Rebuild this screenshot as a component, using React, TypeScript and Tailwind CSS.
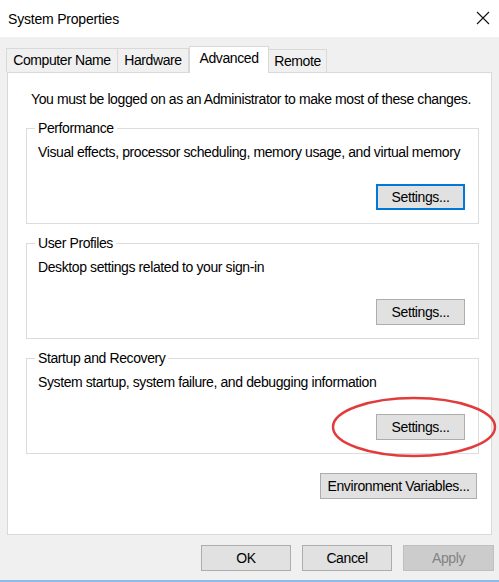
import React from "react";

function Btn({
  children,
  w,
  variant = "normal",
}: {
  children: React.ReactNode;
  w: string;
  variant?: "normal" | "focused" | "disabled";
}) {
  const base =
    "h-[26px] flex items-center justify-center text-[14px] tracking-[-0.4px] leading-none whitespace-nowrap";
  const v =
    variant === "focused"
      ? "bg-[#e1e1e1] border-2 border-[#0078d7] text-black"
      : variant === "disabled"
      ? "bg-[#cccccc] border border-[#bfbfbf] text-[#838383]"
      : "bg-[#e1e1e1] border border-[#adadad] text-black";
  return <div className={`${base} ${v} ${w}`}>{children}</div>;
}

function Group({
  title,
  desc,
  focused,
}: {
  title: string;
  desc: string;
  focused?: boolean;
}) {
  return (
    <div className="relative ml-[18px] w-[453px] h-[96px] border border-[#dcdcdc]">
      <div className="absolute left-[8px] top-[-10px] bg-white px-[3px] text-[14px] tracking-[-0.4px] leading-[18px] whitespace-nowrap">
        {title}
      </div>
      <div className="pl-[11px] pt-[14px] text-[14px] tracking-[-0.4px] leading-[18px] whitespace-nowrap">
        {desc}
      </div>
      <div className="flex justify-end pr-[13px] pt-[23px]">
        <Btn w="w-[89px]" variant={focused ? "focused" : "normal"}>
          Settings...
        </Btn>
      </div>
    </div>
  );
}

export default function App() {
  return (
    <div
      className="relative w-[499px] h-[582px] bg-[#f0f0f0] text-black overflow-hidden"
      style={{ fontFamily: '"Liberation Sans", Arial, sans-serif' }}
    >
      {/* Title bar */}
      <div className="h-[37px] bg-white flex items-center justify-between pl-[8px] pr-[9px]">
        <span className="text-[14px] tracking-[-0.2px] leading-none">System Properties</span>
        <svg width="14" height="14" viewBox="0 0 14 14" className="mt-[-2px]">
          <path d="M1 1 L13 13 M13 1 L1 13" stroke="#111" strokeWidth="1.1" fill="none" />
        </svg>
      </div>

      {/* Tabs */}
      <div className="flex items-end pl-[6px] h-[35px] text-[14px] tracking-[-0.4px]">
        <div className="h-[24px] flex items-center justify-center border border-b-0 border-[#d9d9d9] bg-[#f0f0f0] w-[112px] whitespace-nowrap">
          Computer Name
        </div>
        <div className="h-[24px] flex items-center justify-center border border-l-0 border-b-0 border-[#d9d9d9] bg-[#f0f0f0] w-[71px]">
          Hardware
        </div>
        <div className="h-[27px] flex items-center justify-center border border-b-0 border-[#d9d9d9] bg-white w-[80px] relative z-10 mb-[-1px] pb-[4px]">
          Advanced
        </div>
        <div className="h-[23px] flex items-center justify-center border border-l-0 border-b-0 border-[#d9d9d9] bg-[#f0f0f0] w-[58px]">
          Remote
        </div>
      </div>

      {/* Panel */}
      <div className="ml-[7px] w-[485px] h-[463px] bg-white border border-[#d9d9d9]">
        <div className="pl-[23px] pt-[17px] text-[14px] tracking-[-0.4px] leading-[18px] whitespace-nowrap">
          You must be logged on as an Administrator to make most of these changes.
        </div>
        <div className="mt-[20px] flex flex-col gap-[19px]">
          <Group
            title="Performance"
            desc="Visual effects, processor scheduling, memory usage, and virtual memory"
            focused
          />
          <Group title="User Profiles" desc="Desktop settings related to your sign-in" />
          <Group
            title="Startup and Recovery"
            desc="System startup, system failure, and debugging information"
          />
        </div>
        <div className="flex justify-end pr-[14px] pt-[19px]">
          <Btn w="w-[157px]">Environment Variables...</Btn>
        </div>
      </div>

      {/* Bottom buttons */}
      <div className="flex justify-end gap-[11px] pr-[5px] pt-[10px]">
        <Btn w="w-[90px]">OK</Btn>
        <Btn w="w-[90px]">Cancel</Btn>
        <Btn w="w-[91px]" variant="disabled">
          Apply
        </Btn>
      </div>

      {/* Bottom window border */}
      <div className="absolute left-0 right-0 bottom-0 h-[2px] bg-[#8cbde6]" />

      {/* Red annotation ellipse */}
      <svg
        className="absolute left-[331px] top-[395px] pointer-events-none"
        width="168"
        height="64"
        viewBox="0 0 168 64"
      >
        <ellipse cx="83" cy="32" rx="81" ry="29" fill="none" stroke="#e23b3b" strokeWidth="2.5" />
      </svg>
    </div>
  );
}
